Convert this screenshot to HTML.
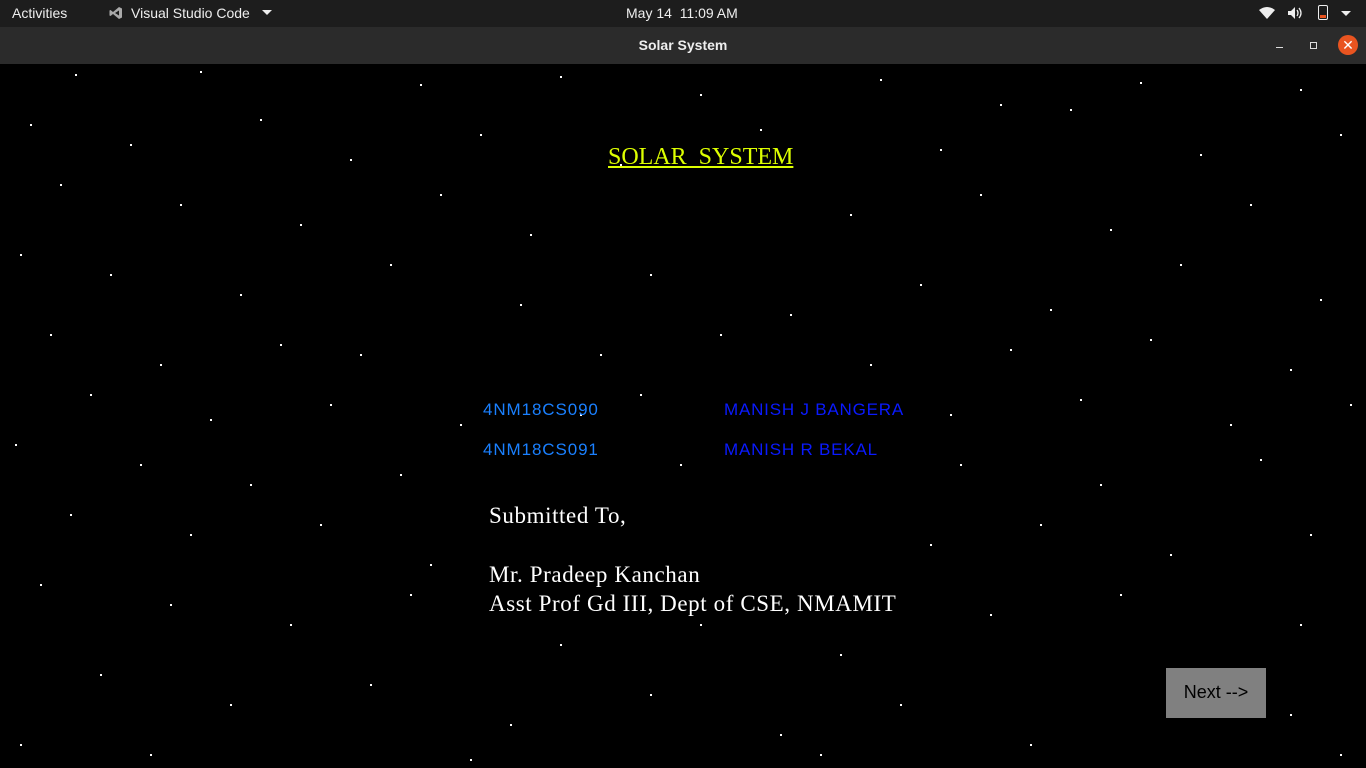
<!DOCTYPE html>
<html><head><meta charset="utf-8"><style>
*{margin:0;padding:0}
body{width:1366px;height:768px;overflow:hidden;background:#000;font-family:"Liberation Sans",sans-serif;position:relative}
#top{position:absolute;left:0;top:0;width:1366px;height:27px;background:#1d1d1d;color:#eee;font-size:14px}
#title{position:absolute;left:0;top:27px;width:1366px;height:37px;background:#2b2b2b;color:#eee;font-size:14px;font-weight:bold;text-align:center;line-height:37px}
.a{position:absolute}
#sky{position:absolute;left:0;top:64px;width:1366px;height:704px}
.s{position:absolute;width:2px;height:2px;background:#fff}
.ser{font-family:"Liberation Serif",serif}
</style></head><body>
<div id="top">
<span class="a" style="left:12px;top:5px">Activities</span>
<svg class="a" style="left:109px;top:6px" width="14" height="14" viewBox="0 0 14 14"><path d="M10 1 L13 2.5 V11.5 L10 13 L4 8 L1.5 10 L0.5 9.5 V4.5 L1.5 4 L4 6 Z M10 4.5 L6 7 L10 9.5Z" fill="#aaa"/></svg>
<span class="a" style="left:131px;top:5px">Visual Studio Code</span>
<span class="a" style="left:262px;top:10px;border:5px solid transparent;border-top:5px solid #eee"></span>
<span class="a" style="left:626px;top:5px">May 14&nbsp; 11:09 AM</span>
<svg class="a" style="left:1258px;top:6px" width="18" height="14"><path d="M1 4 Q9 -2 17 4 L9 13 Z" fill="#eee"/></svg>
<svg class="a" style="left:1287px;top:6px" width="18" height="14"><path d="M1 5h3l4-4v12l-4-4H1z" fill="#eee"/><path d="M10 4q2 3 0 6M12 2q4 5 0 10" stroke="#eee" fill="none" stroke-width="1.3"/></svg>
<div class="a" style="left:1318px;top:5px;width:8px;height:13px;border:1.5px solid #eee;border-radius:2px"><div style="position:absolute;bottom:1px;left:1px;width:6px;height:3px;background:#e95420"></div></div>
<span class="a" style="left:1341px;top:11px;border:5px solid transparent;border-top:5px solid #eee"></span>
</div>
<div id="title">Solar System
<div class="a" style="left:1276px;top:20px;width:7px;height:1px;background:#ddd"></div>
<div class="a" style="left:1310px;top:15px;width:5px;height:5px;border:1px solid #ddd"></div>
<div class="a" style="left:1338px;top:8px;width:20px;height:20px;border-radius:50%;background:#e95420;color:#fff;line-height:20px;font-size:14px;font-weight:normal">✕</div>
</div>
<div id="sky">
<div class="s" style="left:75px;top:10px"></div><div class="s" style="left:200px;top:7px"></div><div class="s" style="left:420px;top:20px"></div><div class="s" style="left:560px;top:12px"></div><div class="s" style="left:700px;top:30px"></div><div class="s" style="left:880px;top:15px"></div><div class="s" style="left:1000px;top:40px"></div><div class="s" style="left:1140px;top:18px"></div><div class="s" style="left:1300px;top:25px"></div><div class="s" style="left:30px;top:60px"></div>
<div class="s" style="left:130px;top:80px"></div><div class="s" style="left:260px;top:55px"></div><div class="s" style="left:350px;top:95px"></div><div class="s" style="left:480px;top:70px"></div><div class="s" style="left:620px;top:100px"></div><div class="s" style="left:760px;top:65px"></div><div class="s" style="left:940px;top:85px"></div><div class="s" style="left:1070px;top:45px"></div><div class="s" style="left:1200px;top:90px"></div><div class="s" style="left:1340px;top:70px"></div>
<div class="s" style="left:60px;top:120px"></div><div class="s" style="left:180px;top:140px"></div><div class="s" style="left:300px;top:160px"></div><div class="s" style="left:440px;top:130px"></div><div class="s" style="left:530px;top:170px"></div><div class="s" style="left:850px;top:150px"></div><div class="s" style="left:980px;top:130px"></div><div class="s" style="left:1110px;top:165px"></div><div class="s" style="left:1250px;top:140px"></div><div class="s" style="left:20px;top:190px"></div>
<div class="s" style="left:110px;top:210px"></div><div class="s" style="left:240px;top:230px"></div><div class="s" style="left:390px;top:200px"></div><div class="s" style="left:520px;top:240px"></div><div class="s" style="left:650px;top:210px"></div><div class="s" style="left:790px;top:250px"></div><div class="s" style="left:920px;top:220px"></div><div class="s" style="left:1050px;top:245px"></div><div class="s" style="left:1180px;top:200px"></div><div class="s" style="left:1320px;top:235px"></div>
<div class="s" style="left:50px;top:270px"></div><div class="s" style="left:160px;top:300px"></div><div class="s" style="left:280px;top:280px"></div><div class="s" style="left:360px;top:290px"></div><div class="s" style="left:600px;top:290px"></div><div class="s" style="left:720px;top:270px"></div><div class="s" style="left:870px;top:300px"></div><div class="s" style="left:1010px;top:285px"></div><div class="s" style="left:1150px;top:275px"></div><div class="s" style="left:1290px;top:305px"></div>
<div class="s" style="left:90px;top:330px"></div><div class="s" style="left:210px;top:355px"></div><div class="s" style="left:330px;top:340px"></div><div class="s" style="left:460px;top:360px"></div><div class="s" style="left:640px;top:330px"></div><div class="s" style="left:950px;top:350px"></div><div class="s" style="left:1080px;top:335px"></div><div class="s" style="left:1230px;top:360px"></div><div class="s" style="left:1350px;top:340px"></div><div class="s" style="left:15px;top:380px"></div>
<div class="s" style="left:140px;top:400px"></div><div class="s" style="left:250px;top:420px"></div><div class="s" style="left:400px;top:410px"></div><div class="s" style="left:960px;top:400px"></div><div class="s" style="left:1100px;top:420px"></div><div class="s" style="left:1260px;top:395px"></div><div class="s" style="left:70px;top:450px"></div><div class="s" style="left:190px;top:470px"></div><div class="s" style="left:320px;top:460px"></div><div class="s" style="left:430px;top:500px"></div>
<div class="s" style="left:930px;top:480px"></div><div class="s" style="left:1040px;top:460px"></div><div class="s" style="left:1170px;top:490px"></div><div class="s" style="left:1310px;top:470px"></div><div class="s" style="left:40px;top:520px"></div><div class="s" style="left:170px;top:540px"></div><div class="s" style="left:290px;top:560px"></div><div class="s" style="left:410px;top:530px"></div><div class="s" style="left:560px;top:580px"></div><div class="s" style="left:700px;top:560px"></div>
<div class="s" style="left:840px;top:590px"></div><div class="s" style="left:990px;top:550px"></div><div class="s" style="left:1120px;top:530px"></div><div class="s" style="left:1300px;top:560px"></div><div class="s" style="left:100px;top:610px"></div><div class="s" style="left:230px;top:640px"></div><div class="s" style="left:370px;top:620px"></div><div class="s" style="left:510px;top:660px"></div><div class="s" style="left:650px;top:630px"></div><div class="s" style="left:780px;top:670px"></div>
<div class="s" style="left:900px;top:640px"></div><div class="s" style="left:1030px;top:680px"></div><div class="s" style="left:1290px;top:650px"></div><div class="s" style="left:20px;top:680px"></div><div class="s" style="left:150px;top:690px"></div><div class="s" style="left:470px;top:695px"></div><div class="s" style="left:820px;top:690px"></div><div class="s" style="left:1340px;top:690px"></div><div class="s" style="left:580px;top:350px"></div><div class="s" style="left:680px;top:400px"></div>
</div>
<div class="a ser" style="left:608px;top:144px;font-size:24px;color:#ddff00;text-decoration:underline;white-space:pre">SOLAR  SYSTEM</div>
<div class="a" style="left:483px;top:400px;font-size:17px;letter-spacing:0.9px;color:#1a80ff">4NM18CS090</div>
<div class="a" style="left:483px;top:440px;font-size:17px;letter-spacing:0.9px;color:#1a80ff">4NM18CS091</div>
<div class="a" style="left:724px;top:400px;font-size:17px;letter-spacing:0.8px;color:#0a1aff">MANISH J BANGERA</div>
<div class="a" style="left:724px;top:440px;font-size:17px;letter-spacing:0.8px;color:#0a1aff">MANISH R BEKAL</div>
<div class="a ser" style="left:489px;top:503px;font-size:23px;letter-spacing:0.6px;color:#fff">Submitted To,</div>
<div class="a ser" style="left:489px;top:560px;font-size:23px;letter-spacing:0.6px;color:#fff;line-height:29px">Mr. Pradeep Kanchan<br>Asst Prof Gd III, Dept of CSE, NMAMIT</div>
<div class="a" style="left:1166px;top:668px;width:100px;height:50px;background:#808080;color:#000;font-size:18px;line-height:48px;text-align:center">Next --&gt;</div>
</body></html>
